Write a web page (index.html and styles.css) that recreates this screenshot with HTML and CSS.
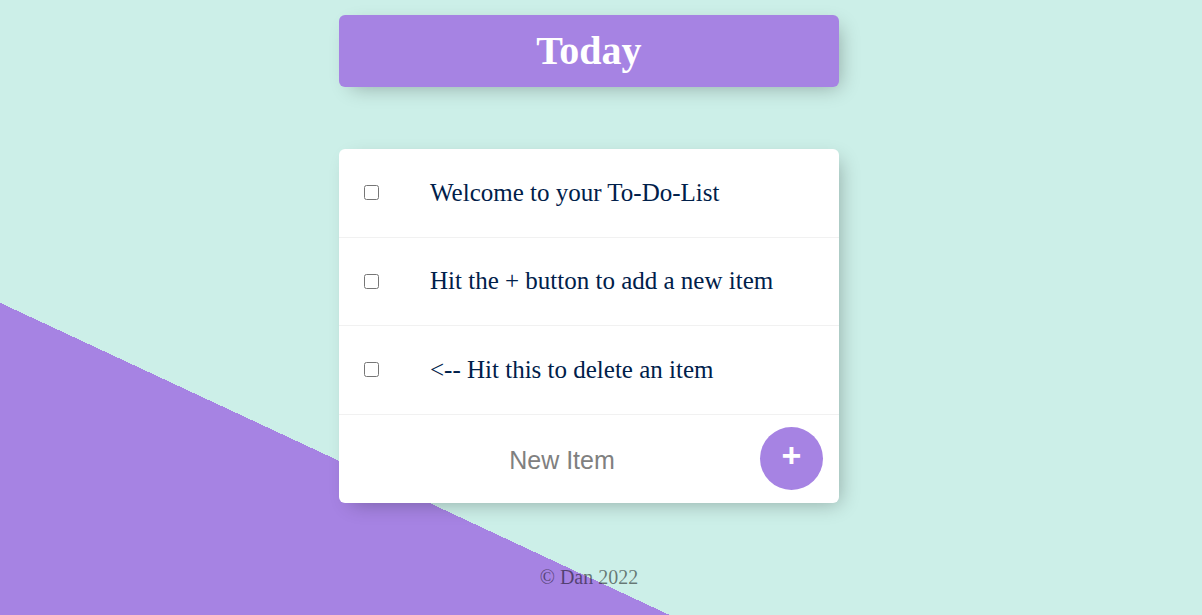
FILE: index.html
```html
<!DOCTYPE html>
<html lang="en">
<head>
<meta charset="utf-8">
<title>To-Do List</title>
<link rel="stylesheet" href="styles.css">
</head>
<body>
  <div class="page">
    <div class="box heading">
      <h1 class="title">Today</h1>
    </div>
    <div class="box list">
      <div class="item">
        <input type="checkbox" class="check">
        <p class="text">Welcome to your To-Do-List</p>
      </div>
      <div class="item">
        <input type="checkbox" class="check">
        <p class="text">Hit the + button to add a new item</p>
      </div>
      <div class="item">
        <input type="checkbox" class="check">
        <p class="text">&lt;-- Hit this to delete an item</p>
      </div>
      <form class="item new-form">
        <input type="text" class="new-input" placeholder="New Item" autocomplete="off">
        <button type="button" class="add-btn">+</button>
      </form>
    </div>
    <footer class="footer">© Dan 2022</footer>
  </div>
</body>
</html>
```

FILE: styles.css
```css
html {
  height: 100%;
  background-color: #CCEFE8;
  background-image: linear-gradient(25deg, #A683E3 283px, #CCEFE8 283px);
  background-repeat: no-repeat;
}

body {
  margin: 0;
  height: 100%;
  font-family: "Liberation Serif", "Times New Roman", serif;
  overflow: hidden;
}

.page {
  display: flex;
  flex-direction: column;
  align-items: center;
  padding-top: 15px;
  padding-right: 24px;
}

.box {
  width: 500px;
  background: #ffffff;
  border-radius: 6px;
  box-shadow: 6px 6px 19px -6px rgba(0, 0, 0, 0.3);
}

.heading {
  background-color: #A683E3;
  height: 72px;
  display: flex;
  align-items: center;
  justify-content: center;
}

.title {
  margin: 0;
  color: #ffffff;
  font-size: 40px;
  font-weight: bold;
  line-height: 1;
}

.list {
  margin-top: 62px;
}

.item {
  height: 88.5px;
  display: flex;
  align-items: center;
  border-bottom: 1px solid #F1F1F1;
  box-sizing: border-box;
}

.item:last-child {
  border-bottom: 0;
}

.check {
  margin: 0 25px;
  width: 15px;
  height: 15px;
}

.text {
  margin: 0;
  padding: 0 25px 0 26px;
  font-size: 25px;
  color: #00204a;
}

.new-form {
  margin: 0;
}

.new-input {
  margin-left: 25px;
  width: 391px;
  height: 75px;
  border: none;
  background: transparent;
  text-align: center;
  font-family: "Liberation Sans", Arial, sans-serif;
  font-size: 25px;
  padding: 3px 0 0 5px;
  box-sizing: border-box;
  outline: none;
}

.new-input::placeholder {
  color: grey;
  opacity: 1;
}

.add-btn {
  margin-left: 5px;
  width: 63px;
  height: 63px;
  border-radius: 50%;
  border: 0;
  background-color: #A683E3;
  color: #ffffff;
  font-family: "Liberation Sans", Arial, sans-serif;
  font-size: 34px;
  font-weight: bold;
  line-height: 1;
  padding: 0 0 8px 0;
}

.footer {
  margin-top: 63px;
  font-size: 20px;
  color: rgba(0, 0, 0, 0.5);
  text-align: center;
}
```
